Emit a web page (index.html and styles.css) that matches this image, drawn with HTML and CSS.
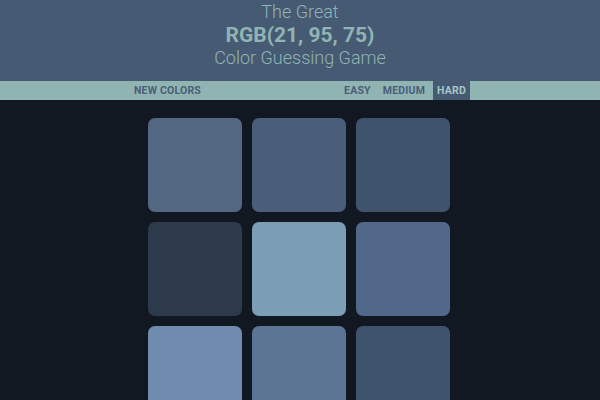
FILE: index.html
```html
<!DOCTYPE html>
<html>
<head>
<meta charset="utf-8">
<link rel="stylesheet" href="styles.css">
</head>
<body>
<header class="header">
  <div class="title-small">The Great</div>
  <div class="title-rgb">RGB(21, 95, 75)</div>
  <div class="title-small">Color Guessing Game</div>
</header>
<nav class="bar">
  <div class="bar-inner">
    <button class="btn">NEW COLORS</button>
    <span class="spacer"></span>
    <button class="btn">EASY</button>
    <button class="btn">MEDIUM</button>
    <button class="btn selected">HARD</button>
  </div>
</nav>
<main class="grid">
  <div class="square c1"></div>
  <div class="square c2"></div>
  <div class="square c3"></div>
  <div class="square c4"></div>
  <div class="square c5"></div>
  <div class="square c6"></div>
  <div class="square c7"></div>
  <div class="square c8"></div>
  <div class="square c9"></div>
</main>
</body>
</html>
```
FILE: styles.css
```css
html, body {
  margin: 0;
  padding: 0;
  background: #111822;
  font-family: Roboto, "Liberation Sans", sans-serif;
  height: 400px;
  overflow: hidden;
}
.header {
  background: #475a73;
  color: #90b4b2;
  text-align: center;
  height: 81px;
  box-sizing: border-box;
  padding-top: 1px;
}
.title-small {
  font-size: 18px;
  font-weight: 300;
  line-height: 22px;
}
.title-rgb {
  font-size: 21px;
  font-weight: 700;
  line-height: 24px;
}
.bar {
  background: #90b4b2;
  height: 19px;
}
.bar-inner {
  width: 340px;
  margin: 0 auto;
  display: flex;
  height: 19px;
  align-items: stretch;
}
.spacer { flex: 1; }
.btn {
  border: none;
  background: transparent;
  color: #4a5e79;
  font-family: Roboto, "Liberation Sans", sans-serif;
  font-weight: 700;
  font-size: 10.5px;
  letter-spacing: 0.2px;
  padding: 0 4px;
  margin: 0 0 0 4px;
  cursor: pointer;
}
.btn:first-child { margin-left: 0; }
.btn.selected {
  background: #475a73;
  color: #a7c6c4;
}
.grid {
  display: grid;
  grid-template-columns: repeat(3, 94px);
  grid-auto-rows: 94px;
  gap: 10px;
  width: 304px;
  justify-content: start;
  margin: 18px auto 0;
}
.square { border-radius: 7px; }
.c1 { background: #536782; }
.c2 { background: #4a5e7b; }
.c3 { background: #40536c; }
.c4 { background: #2c3a4c; }
.c5 { background: #7b9db6; }
.c6 { background: #52688a; }
.c7 { background: #6f8cae; }
.c8 { background: #5c7595; }
.c9 { background: #40536c; }
```
